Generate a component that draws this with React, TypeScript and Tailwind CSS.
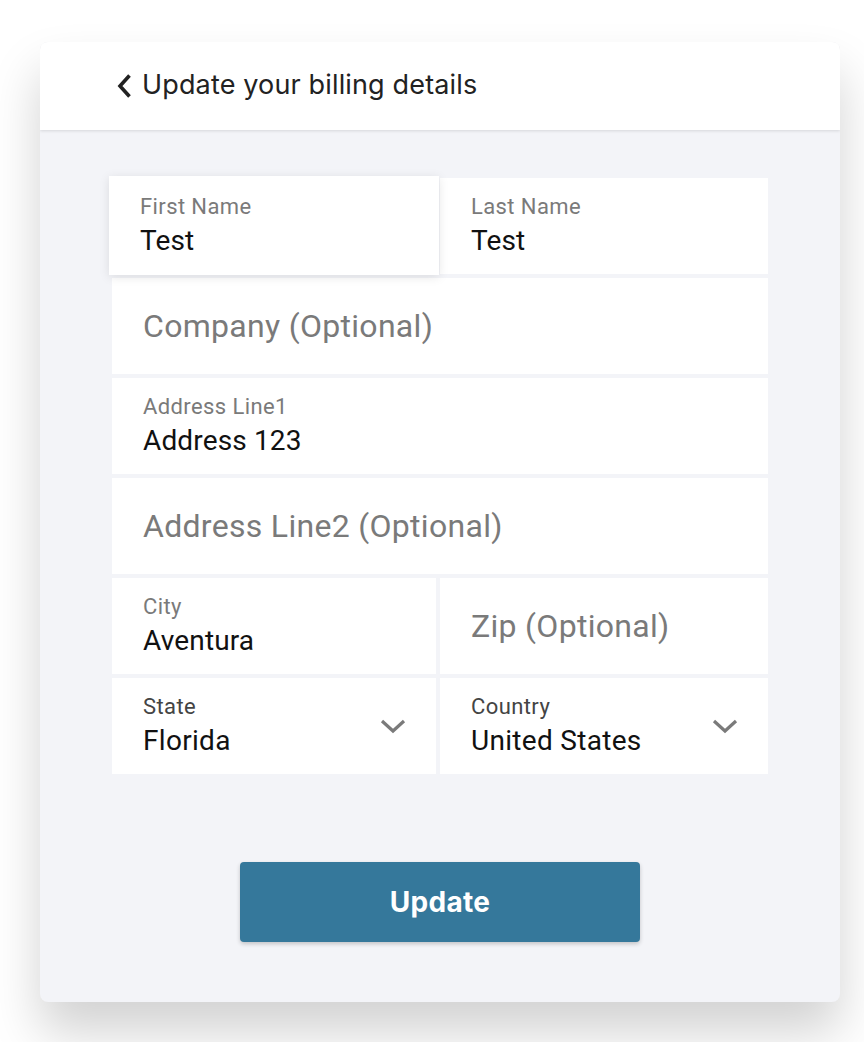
import React from "react";

const roboto = { fontFamily: "Roboto, 'Liberation Sans', sans-serif" };
const inter = { fontFamily: "Inter, 'Liberation Sans', sans-serif" };

function Chevron() {
  return (
    <svg width="26" height="18" viewBox="0 0 26 18" className="shrink-0">
      <path d="M2 4 L13 14 L24 4" fill="none" stroke="#7a7a7a" strokeWidth="3.2" />
    </svg>
  );
}

function Field({ label, value, extra = "", labelColor = "text-[#7a7a7a]" }: { label: string; value: string; extra?: string; labelColor?: string }) {
  return (
    <div className={`bg-white h-[96px] pl-[31px] pr-4 flex flex-col justify-start pt-[16px] ${extra}`} style={roboto}>
      <div className={`text-[22px] leading-[26px] ${labelColor} tracking-[0.4px]`}>{label}</div>
      <div className="text-[28px] leading-[32px] text-[#111] mt-[5px] tracking-[0.15px]">{value}</div>
    </div>
  );
}

function Placeholder({ text }: { text: string }) {
  return (
    <div className="bg-white h-[96px] pl-[31px] flex items-center" style={roboto}>
      <span className="text-[32px] text-[#7a7a7a] tracking-[0.3px]">{text}</span>
    </div>
  );
}

function SelectField({ label, value }: { label: string; value: string }) {
  return (
    <div className="bg-white h-[96px] pl-[31px] pr-[30px] flex items-start justify-between pt-[16px]" style={roboto}>
      <div className="flex flex-col">
        <div className="text-[22px] leading-[26px] text-[#444] tracking-[0.4px]">{label}</div>
        <div className="text-[28px] leading-[32px] text-[#111] mt-[5px] tracking-[0.3px]">{value}</div>
      </div>
      <div className="mt-[23px]">
        <Chevron />
      </div>
    </div>
  );
}

export default function App() {
  return (
    <div className="w-[864px] h-[1042px] bg-white overflow-hidden pt-[42px] pl-[40px]">
      <div className="w-[800px] h-[960px] rounded-[8px] bg-[#f3f4f8] shadow-[0_30px_50px_rgba(0,0,0,0.18)] overflow-hidden flex flex-col">
        <div className="h-[88px] bg-white shadow-[0_1px_3px_rgba(0,0,0,0.12)] flex items-center pl-[76px] relative z-10" style={inter}>
          <svg width="18" height="26" viewBox="0 0 18 26" className="mr-[8px]">
            <path d="M13.5 2.5 L4 13 L13.5 23.5" fill="none" stroke="#222" strokeWidth="3.6" />
          </svg>
          <span className="text-[27px] leading-[32px] text-[#222] tracking-[0.15px] -mt-[2px]">Update your billing details</span>
        </div>
        <div className="flex-1 flex flex-col items-center pt-[48px]">
          <div className="w-[656px] grid grid-cols-[324px_328px] gap-[4px]">
            <Field
              label="First Name"
              value="Test"
              extra="relative z-10 -ml-[3px] -mr-[3px] -mt-[2px] -mb-[1px] h-[99px] pt-[18px] shadow-[0_2px_10px_rgba(0,0,0,0.1)]"
            />
            <Field label="Last Name" value="Test" />
            <div className="col-span-2"><Placeholder text="Company (Optional)" /></div>
            <div className="col-span-2"><Field label="Address Line1" value="Address 123" /></div>
            <div className="col-span-2"><Placeholder text="Address Line2 (Optional)" /></div>
            <Field label="City" value="Aventura" />
            <Placeholder text="Zip (Optional)" />
            <SelectField label="State" value="Florida" />
            <SelectField label="Country" value="United States" />
          </div>
          <button
            className="mt-[88px] w-[400px] h-[80px] rounded-[4px] bg-[#35789b] text-white text-[28px] font-bold tracking-[0.3px] shadow-[0_2px_4px_rgba(0,0,0,0.2)]"
            style={inter}
          >
            Update
          </button>
        </div>
      </div>
    </div>
  );
}
